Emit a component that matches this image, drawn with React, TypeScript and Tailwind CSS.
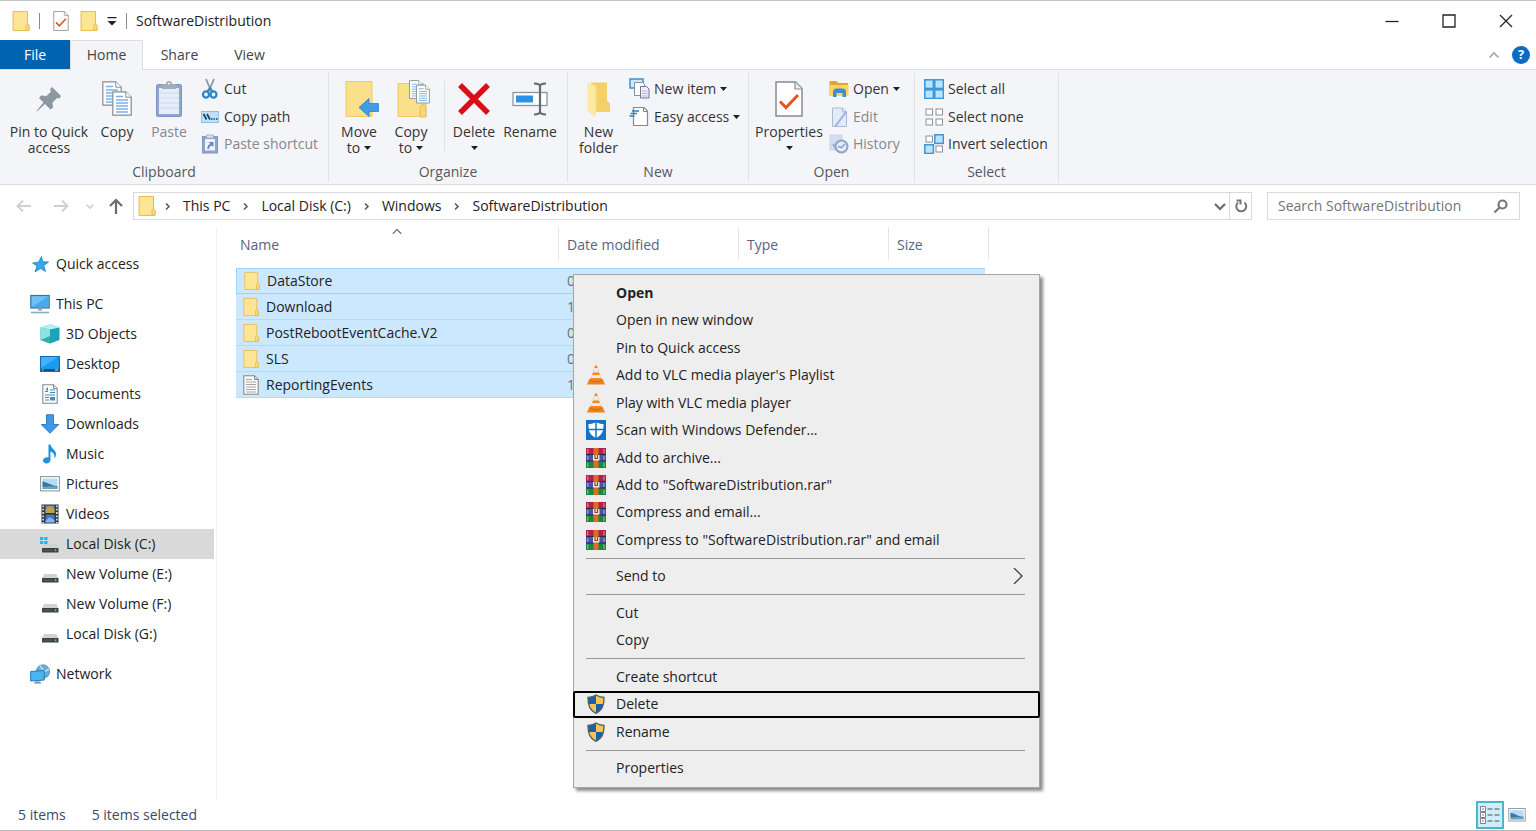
import React from "react";

type IconProps = { className?: string };

function Folder({ className = "w-5 h-5" }: IconProps) {
  return (
    <svg viewBox="0 0 20 22" className={className} aria-hidden="true">
      <path d="M2 1.500h14.500v13l1.500 1v5H2z" fill="#fbe28c" stroke="#e6bf5a" strokeWidth="1" />
      <path d="M3 2.500h12.500v17H3z" fill="#fde595" />
      <path d="M15 20.500v-5l1.500-2 1.500 2v5z" fill="#f9dc7e" stroke="#e0b548" strokeWidth=".8" />
    </svg>
  );
}

function CheckedPage({ className = "" }: IconProps) {
  return (
    <svg viewBox="0 0 28 36" className={className} aria-hidden="true">
      <path d="M1 1h19.500l6.500 6.500V35H1z" fill="#fff" stroke="#8b8b8f" strokeWidth="1.500" />
      <path d="M20 1v7h7" fill="#eceef2" stroke="#8b8b8f" strokeWidth="1.200" />
      <path d="M5 20.500l6 6L23 14" fill="none" stroke="#dd5a26" strokeWidth="3" />
    </svg>
  );
}

function Pin() {
  return (
    <svg viewBox="0 0 28 28" className="h-7 w-7" aria-hidden="true">
      <path d="M17 2l9 9-1.500 2.500-2.500-.5-4.500 4.500.5 5-2.500 2-5.500-5.500L2 26.500 1.500 26 8.500 17.500 4 13l2-2.500 5.500.5L16 6.500 15 4z" fill="#8d979f" />
    </svg>
  );
}

function Sheet({ x, y }: { x: number; y: number }) {
  return (
    <g transform={`translate(${x} ${y})`}>
      <path d="M.8.8h13l5.400 5.400v18H.8z" fill="#fff" stroke="#848c94" strokeWidth="1.200" />
      <path d="M13.800.8v5.400h5.400" fill="#fff" stroke="#848c94" strokeWidth="1" />
      <path d="M4 5.500h7M4 9h12M4 12h12M4 15h12M4 18h12M4 21h12" stroke="#79b0e8" strokeWidth="1.300" />
    </g>
  );
}

function CopyIcon() {
  return (
    <svg viewBox="0 0 32 36" className="h-9 w-8" aria-hidden="true">
      <Sheet x={1} y={0} />
      <Sheet x={11} y={10} />
    </svg>
  );
}

function PasteIcon() {
  return (
    <svg viewBox="0 0 28 38" className="h-[38px] w-7" aria-hidden="true">
      <rect x="1.500" y="4.500" width="25" height="32" rx="1.500" fill="#8fa6cf" stroke="#7d94bf" />
      <rect x="4" y="8" width="20" height="26" fill="#e6edf9" />
      <path d="M4 13h20M4 18h20M4 23h20M4 28h20" stroke="#ccd9f0" />
      <path d="M7 4h4a3 3 0 0 1 6 0h4v5H7z" fill="#a3acbb" />
      <circle cx="14" cy="3.500" r="1" fill="#f5f6f9" />
    </svg>
  );
}

function CutIcon() {
  return (
    <svg viewBox="0 0 18 21" className="h-[21px] w-[18px]" aria-hidden="true">
      <path d="M5 1l5.500 13M13 1L7.500 14" stroke="#8c969e" strokeWidth="1.800" fill="none" />
      <ellipse cx="5" cy="16.500" rx="3" ry="3.200" fill="none" stroke="#2b86c8" strokeWidth="2.200" />
      <ellipse cx="12.500" cy="16.500" rx="3" ry="3.200" fill="none" stroke="#2b86c8" strokeWidth="2.200" />
      <path d="M6.500 13L9 10l2.500 3" fill="none" stroke="#2b86c8" strokeWidth="1.800" />
    </svg>
  );
}

function CopyPathIcon() {
  return (
    <svg viewBox="0 0 18 12" className="h-3 w-[18px]" aria-hidden="true">
      <rect x=".5" y=".5" width="17" height="11" fill="#bfe0f6" stroke="#91c0e0" />
      <path d="M2.500 3l3 5.500M6 3l3 5.500" stroke="#16405f" strokeWidth="1.700" />
      <path d="M10 8h1.500M12.500 8H14M15 8h1.500" stroke="#16405f" strokeWidth="1.500" />
    </svg>
  );
}

function PasteShortcutIcon() {
  return (
    <svg viewBox="0 0 18 20" className="h-5 w-[18px]" aria-hidden="true">
      <rect x="1.500" y="2.500" width="15" height="16.500" fill="#8fa5cc" stroke="#8199c4" />
      <rect x="4" y="5" width="10" height="11.500" fill="#edf2fb" />
      <path d="M5.500 1h7v3h-7z" fill="#dde4f0" stroke="#98a7c2" strokeWidth=".8" />
      <path d="M6.500 15c-.5-3 1-4.500 3-5l-2-2h5v5l-1.500-1.500c-2 .5-3 1.500-3 3.500z" fill="#6886b8" />
    </svg>
  );
}

function MoveIcon() {
  return (
    <svg viewBox="-6 0 40 38" className="h-[38px] w-10" aria-hidden="true">
      <path d="M1 1.500h26v35H1z" fill="#fbe08a" stroke="#ecca69" />
      <path d="M22 36.500V29l3-2 2 2v7.500z" fill="#f5d270" />
      <path d="M14 27.500L24 18.500v5h9.500v8H24v5z" fill="#3f9ce6" stroke="#2b82cb" strokeWidth=".8" />
    </svg>
  );
}

function CopyToIcon() {
  return (
    <svg viewBox="-6 0 40 38" className="h-[38px] w-10" aria-hidden="true">
      <path d="M1 3.500h26v18l2 2v13H1z" fill="#fbe08a" stroke="#ecca69" />
      <path d="M23 37V27l3-3 3 3v10z" fill="#f6d67a" stroke="#dfb650" strokeWidth=".8" />
      <g transform="translate(12 0) scale(.7 .76)"><Sheet x={0} y={0} /><Sheet x={10} y={6} /></g>
    </svg>
  );
}

function DeleteIcon() {
  return (
    <svg viewBox="0 0 34 34" className="h-[34px] w-[34px]" aria-hidden="true">
      <path d="M3 3l28 28M31 3L3 31" stroke="#d90f17" strokeWidth="5.500" />
    </svg>
  );
}

function RenameIcon() {
  return (
    <svg viewBox="0 0 36 36" className="h-9 w-9" aria-hidden="true">
      <rect x="1" y="11.500" width="34" height="13" fill="#fff" stroke="#8d939a" strokeWidth="1.300" />
      <rect x="4" y="14.500" width="17" height="7" fill="#2f8fe2" />
      <path d="M22 2.500c4 0 6 .5 6 3v25c0 2.500-2 3-6 3M34 2.500c-4 0-6 .5-6 3v25c0 2.500 2 3 6 3" fill="none" stroke="#666b70" strokeWidth="2.200" />
    </svg>
  );
}

function NewFolderIcon() {
  return (
    <svg viewBox="0 0 26 36" className="h-9 w-[26px]" aria-hidden="true">
      <path d="M5 1.500h16v18l3 3V31H5z" fill="#f4d069" />
      <path d="M1.500 1.500L10 5v24L8 35 1.500 30z" fill="#fdeaa0" />
      <path d="M10 5v24l-2 6" fill="none" stroke="#f7dc84" />
    </svg>
  );
}

function NewItemIcon() {
  return (
    <svg viewBox="0 0 21 21" className="h-[21px] w-[21px]" aria-hidden="true">
      <rect x="1" y="1" width="13" height="9" fill="#cfeafa" stroke="#3e93c3" strokeWidth="1.500" />
      <path d="M5.500 4.500h8l2 2v11h-10z" fill="#fff" stroke="#82919e" />
      <path d="M11.500 8.500h6l2.500 2.500v9h-8.500z" fill="#f0effb" stroke="#77758f" />
      <path d="M13 13h5.500M13 15.500h5.500M13 18h5.500" stroke="#b4afd5" />
    </svg>
  );
}

function EasyAccessIcon() {
  return (
    <svg viewBox="0 0 21 21" className="h-[21px] w-[21px]" aria-hidden="true">
      <path d="M4.500 1.500H15l3.500 3.500v14.500h-14z" fill="#fff" stroke="#84888e" strokeWidth="1.200" />
      <path d="M14.500 1.500v4h4" fill="none" stroke="#84888e" />
      <path d="M3 5h7M1.500 7.500H8M.5 10h5" stroke="#2b7fbe" strokeWidth="1.600" />
    </svg>
  );
}

function OpenIcon() {
  return (
    <svg viewBox="0 0 20 18" className="h-[18px] w-5" aria-hidden="true">
      <path d="M.5 1h7l2 2H19v13H.5z" fill="#e5a52b" />
      <path d="M.5 5h19v11H.5z" fill="#fbd55f" />
      <path d="M4 17V12q0-3.500 3.500-3.500h6Q17 8.500 17 12v5h-3.500v-4h-6v4z" fill="#3c8fcc" />
    </svg>
  );
}

function EditIcon() {
  return (
    <svg viewBox="0 0 20 20" className="h-5 w-5" aria-hidden="true">
      <path d="M3.500 1h10l4 4v14.500h-14z" fill="#e3ebf8" stroke="#a9bad8" />
      <path d="M13.500 1v4h4" fill="none" stroke="#a9bad8" />
      <path d="M17.500 4.500L6.500 19" stroke="#9db2d8" strokeWidth="2" />
    </svg>
  );
}

function HistoryIcon() {
  return (
    <svg viewBox="0 0 20 20" className="h-5 w-5" aria-hidden="true">
      <rect x="1" y="1" width="12" height="15" fill="#d3def3" stroke="#c5d3ec" />
      <circle cx="12.500" cy="12.500" r="6" fill="#e4ebf8" stroke="#8fa3c8" strokeWidth="2" />
      <path d="M9 12.500l3.500 1 3.500-3.500M4 10l3 5" fill="none" stroke="#8fa3c8" strokeWidth="1.600" />
    </svg>
  );
}

function SelectGrid({ on }: { on: boolean[] }) {
  return (
    <svg viewBox="0 0 20 20" className="h-5 w-5" aria-hidden="true">
      {on.map((filled, i) => {
        const x = (i % 2) * 10;
        const y = Math.floor(i / 2) * 10;
        return filled ? (
          <rect key={i} x={x + 0.8} y={y + 0.8} width="8.600" height="8.600" fill="#b9e4fb" stroke="#3797d8" strokeWidth="1.500" />
        ) : (
          <rect key={i} x={x + 2} y={y + 2} width="6.500" height="6" fill="#fff" stroke="#8d9196" strokeWidth="1" />
        );
      })}
    </svg>
  );
}

function Caret() {
  return (
    <svg viewBox="0 0 7 4" className="inline-block h-1 w-[7px]" aria-hidden="true">
      <path d="M0 0h7L3.500 4z" fill="#1f1f1f" />
    </svg>
  );
}

function Chevron({ d, className, w = 2 }: { d: string; className: string; w?: number }) {
  return (
    <svg viewBox="0 0 12 12" className={className} fill="none" stroke="currentColor" strokeWidth={w} aria-hidden="true">
      <path d={d} />
    </svg>
  );
}

/* Ribbon building blocks */

function BigButton({ icon, lines, caret, width, disabled }: { icon: React.ReactNode; lines: string[]; caret?: boolean; width: string; disabled?: boolean }) {
  return (
    <button disabled={disabled} className={`flex flex-col items-center whitespace-nowrap leading-4 disabled:text-[#85888c] ${width}`}>
      <span className="flex h-[51px] items-center">{icon}</span>
      <span>{lines[0]}</span>
      <span className="flex h-4 items-center gap-1">
        {lines[1]}
        {caret && <Caret />}
      </span>
    </button>
  );
}

function SmallButton({ icon, label, caret, gap, disabled }: { icon: React.ReactNode; label: string; caret?: boolean; gap: string; disabled?: boolean }) {
  return (
    <button disabled={disabled} className={`flex flex-1 items-center whitespace-nowrap disabled:text-[#85888c] ${gap}`}>
      {icon}
      <span>{label}</span>
      {caret && <Caret />}
    </button>
  );
}

function Group({ label, width, children }: { label: string; width: string; children: React.ReactNode }) {
  return (
    <section aria-label={label} className={`flex shrink-0 flex-col justify-between border-r border-[#e0e2e6] ${width}`}>
      <div className="flex">{children}</div>
      <div className="text-center leading-5 text-[#55585c]">{label}</div>
    </section>
  );
}

function Stack({ className = "", children }: { className?: string; children: React.ReactNode }) {
  return <div className={`flex h-[85px] flex-col pt-0.5 ${className}`}>{children}</div>;
}

function Ribbon() {
  return (
    <div className="flex h-[116px] shrink-0 overflow-hidden border-y border-[#dcdee2] bg-[#f4f5f9] pt-[3px] pb-0.5 text-[#333]">
      <Group label="Clipboard" width="w-[329px]">
        <BigButton icon={<Pin />} lines={["Pin to Quick", "access"]} width="ml-[9px] w-20" />
        <BigButton icon={<CopyIcon />} lines={["Copy"]} width="w-14" />
        <BigButton icon={<PasteIcon />} lines={["Paste"]} width="w-12" disabled />
        <Stack className="ml-2">
          <SmallButton icon={<CutIcon />} label="Cut" gap="gap-[5px]" />
          <SmallButton icon={<CopyPathIcon />} label="Copy path" gap="gap-[5px]" />
          <SmallButton icon={<PasteShortcutIcon />} label="Paste shortcut" gap="gap-[5px]" disabled />
        </Stack>
      </Group>
      <Group label="Organize" width="w-[239px]">
        <BigButton icon={<MoveIcon />} lines={["Move", "to"]} caret width="ml-1 w-[52px]" />
        <BigButton icon={<CopyToIcon />} lines={["Copy", "to"]} caret width="w-[52px]" />
        <div className="mt-2 ml-[7px] h-[70px] w-px bg-[#e0e2e6]" />
        <BigButton icon={<DeleteIcon />} lines={["Delete"]} caret width="w-[58px]" />
        <BigButton icon={<RenameIcon />} lines={["Rename"]} width="w-[54px]" />
      </Group>
      <Group label="New" width="w-[181px]">
        <BigButton icon={<NewFolderIcon />} lines={["New", "folder"]} width="w-[61px]" />
        <Stack>
          <SmallButton icon={<NewItemIcon />} label="New item" caret gap="gap-1" />
          <SmallButton icon={<EasyAccessIcon />} label="Easy access" caret gap="gap-1" />
          <div className="flex-1" />
        </Stack>
      </Group>
      <Group label="Open" width="w-[166px]">
        <BigButton icon={<CheckedPage className="h-9 w-7" />} lines={["Properties"]} caret width="w-20" />
        <Stack>
          <SmallButton icon={<OpenIcon />} label="Open" caret gap="gap-1" />
          <SmallButton icon={<EditIcon />} label="Edit" gap="gap-1" disabled />
          <SmallButton icon={<HistoryIcon />} label="History" gap="gap-1" disabled />
        </Stack>
      </Group>
      <Group label="Select" width="w-[144px]">
        <Stack className="ml-[9px]">
          <SmallButton icon={<SelectGrid on={[true, true, true, true]} />} label="Select all" gap="gap-1" />
          <SmallButton icon={<SelectGrid on={[false, false, false, false]} />} label="Select none" gap="gap-1" />
          <SmallButton icon={<SelectGrid on={[false, true, true, false]} />} label="Invert selection" gap="gap-1" />
        </Stack>
      </Group>
    </div>
  );
}

function TitleBar() {
  return (
    <header className="flex h-10 shrink-0 items-center border-t border-[#c4c4c4] pl-[11px]">
      <Folder className="h-[22px] w-5" />
      <span className="ml-2 h-4 w-px bg-[#8b8b8b]" />
      <button aria-label="Properties" className="ml-[13px]"><CheckedPage className="h-5 w-4" /></button>
      <button aria-label="New folder" className="ml-[10px]"><Folder className="h-[22px] w-5" /></button>
      <button aria-label="Customize Quick Access Toolbar" className="ml-2">
        <svg viewBox="0 0 10 10" className="h-2.5 w-2.5" aria-hidden="true"><path d="M.5 1h9v1.300h-9zM.5 5h9L5 9.500z" fill="#222" /></svg>
      </button>
      <span className="ml-[9px] h-4 w-px bg-[#8b8b8b]" />
      <h1 className="ml-[9px] text-[#222]">SoftwareDistribution</h1>
      <div className="mr-0.5 ml-auto flex text-[#222]">
        <button aria-label="Minimize" className="grid h-9 w-[57px] place-items-center">
          <svg viewBox="0 0 14 14" className="h-3.5 w-3.5" stroke="currentColor" strokeWidth="1.300"><path d="M.5 7.500h13" /></svg>
        </button>
        <button aria-label="Maximize" className="grid h-9 w-[57px] place-items-center">
          <svg viewBox="0 0 14 14" className="h-3.5 w-3.5" fill="none" stroke="currentColor" strokeWidth="1.300"><path d="M1 1h12v12H1z" /></svg>
        </button>
        <button aria-label="Close" className="grid h-9 w-[57px] place-items-center">
          <svg viewBox="0 0 14 14" className="h-3.5 w-3.5" stroke="currentColor" strokeWidth="1.300"><path d="M1 1l12 12M13 1L1 13" /></svg>
        </button>
      </div>
    </header>
  );
}

function Tabs() {
  return (
    <nav className="flex h-[29px] shrink-0 items-stretch text-[#444]">
      <button className="w-[70px] bg-[#0063b1] text-white">File</button>
      <button className="relative z-10 -mb-px w-[73px] border-x border-t border-[#dcdee2] bg-[#f4f5f9] pb-0.5">Home</button>
      <button className="w-[73px]">Share</button>
      <button className="w-[67px]">View</button>
      <div className="mr-1.5 ml-auto flex items-center gap-3">
        <button aria-label="Minimize the Ribbon"><Chevron d="M1.500 8.500L6 4l4.500 4.500" className="h-3 w-3 text-[#a5a5a5]" w={1.6} /></button>
        <button aria-label="Help" className="grid h-[18px] w-[18px] place-items-center rounded-full bg-[#0a6cc4] text-[13px] font-bold leading-none text-white">?</button>
      </div>
    </nav>
  );
}

function AddressRow() {
  const crumbs = ["This PC", "Local Disk (C:)", "Windows", "SoftwareDistribution"];
  return (
    <div className="flex h-[42px] shrink-0 items-center pr-4">
      <div className="flex w-[133px] shrink-0 items-center pl-4">
        <button aria-label="Back" className="text-[#cfcfcf]">
          <svg viewBox="0 0 16 16" className="h-4 w-4" fill="none" stroke="currentColor" strokeWidth="1.800"><path d="M15 8H2M7 2.500L1.500 8 7 13.500" /></svg>
        </button>
        <button aria-label="Forward" className="ml-[21px] text-[#cfcfcf]">
          <svg viewBox="0 0 16 16" className="h-4 w-4" fill="none" stroke="currentColor" strokeWidth="1.800"><path d="M1 8h13M9 2.500L14.500 8 9 13.500" /></svg>
        </button>
        <button aria-label="Recent locations" className="ml-4 text-[#cfcfcf]"><Chevron d="M2 4.500l4 4 4-4" className="h-2.5 w-2.5" /></button>
        <button aria-label="Up" className="ml-[13px] text-[#6b6b6b]">
          <svg viewBox="0 0 16 16" className="h-4 w-4" fill="none" stroke="currentColor" strokeWidth="2.200"><path d="M8 16V2M2 8l6-6 6 6" /></svg>
        </button>
      </div>
      <div className="flex h-7 min-w-0 flex-1 items-center border border-[#d9d9d9] pl-[3px] text-[#222]">
        <Folder className="h-[22px] w-5" />
        {crumbs.map((crumb) => (
          <React.Fragment key={crumb}>
            <Chevron d="M4 2l4 4-4 4" className="ml-1.5 h-[9px] w-[9px] text-[#555]" />
            <button className="ml-[11px] whitespace-nowrap pr-[5px]">{crumb}</button>
          </React.Fragment>
        ))}
        <button aria-label="Previous locations" className="ml-auto mr-[3px] text-[#6b6b6b]"><Chevron d="M1 4L6 9l5-5" className="h-3 w-3" w={2.2} /></button>
        <button aria-label="Refresh" className="grid h-full w-[22px] place-items-center border-l border-[#d9d9d9] text-[#777]">
          <svg viewBox="0 0 14 16" className="h-4 w-3.5" fill="none" stroke="currentColor" strokeWidth="2"><path d="M10.500 4.500A5 5 0 1 1 4 4.500" /><path d="M2.500 2.500h4v4" /></svg>
        </button>
      </div>
      <label className="ml-[15px] flex h-7 w-[253px] shrink-0 items-center border border-[#d9d9d9] pl-2.5 pr-2.5">
        <input type="search" aria-label="Search SoftwareDistribution" placeholder="Search SoftwareDistribution" className="min-w-0 flex-1 outline-none placeholder:text-[#757575]" />
        <svg viewBox="0 0 16 16" className="h-4 w-4 text-[#777]" fill="none" stroke="currentColor" strokeWidth="2.200"><circle cx="9.500" cy="6.500" r="4" /><path d="M6.500 9.500L1.500 14.500" /></svg>
      </label>
    </div>
  );
}

/* Navigation pane icons */

function Star() {
  return (
    <svg viewBox="0 0 17 17" className="h-[17px] w-[17px]" aria-hidden="true">
      <path d="M9.500.5l1.200 5.200 5.800.3-4.700 3.500 1.700 6-5-3-5.500 3.500 2-6L.5 7l6-.8z" fill="#36a7e8" stroke="#1b84c5" strokeWidth=".8" />
    </svg>
  );
}

function Computer() {
  return (
    <svg viewBox="0 0 20 20" className="h-5 w-5" aria-hidden="true">
      <rect x=".8" y="1.500" width="18.400" height="12.500" fill="#6fc0f6" stroke="#33779f" strokeWidth="1.200" />
      <path d="M2 13L18 2.500V13z" fill="#4aa8ec" />
      <path d="M8 15h4v1.500H8z" fill="#8ca3b3" />
      <path d="M1 18.500h18" stroke="#8ca9bd" strokeWidth="1.600" />
    </svg>
  );
}

function Cube() {
  return (
    <svg viewBox="0 0 20 20" className="h-5 w-5" aria-hidden="true">
      <path d="M.5 3.500L10 .5l9.500 3v12.500L10 19.500.5 16z" fill="#1aa3bb" />
      <path d="M.5 3.500L10 5.500v14L.5 16z" fill="#8be3e3" />
      <path d="M.5 3.500L10 .5l9.500 3-9.500 2z" fill="#b8f0f0" />
      <path d="M10 12v7.500L.5 16z" fill="#2fb0a5" />
    </svg>
  );
}

function Desktop() {
  return (
    <svg viewBox="0 0 20 16" className="h-4 w-5" aria-hidden="true">
      <rect x=".6" y=".6" width="18.800" height="14.800" fill="#199bf2" stroke="#176ab0" strokeWidth="1.200" />
      <path d="M1 12V1h17z" fill="#42b1fa" />
      <path d="M1 14h18" stroke="#164f80" strokeWidth="2" />
      <path d="M2 14h1.500M15 14h3" stroke="#d0ebfc" />
    </svg>
  );
}

function DocumentIcon() {
  return (
    <svg viewBox="0 0 16 20" className="mx-0.5 h-5 w-4" aria-hidden="true">
      <path d="M.8.8h10.700l3.700 3.700v14.700H.8z" fill="#fff" stroke="#7f8c95" strokeWidth="1.100" />
      <path d="M11.500.8v3.700h3.700" fill="#e5eaee" stroke="#7f8c95" />
      <path d="M3 7.500h3M8 6h5M8 8.500h5M3 11h10M3 13.500h4M3 16h4" stroke="#3c8dbd" strokeWidth="1.200" />
      <path d="M3.500 5.500L6 3v4zM8 13h5v3.500H8z" fill="#4191b9" />
    </svg>
  );
}

function DownArrow() {
  return (
    <svg viewBox="0 0 20 20" className="h-5 w-5" aria-hidden="true">
      <path d="M6.500.7h7v9.800h5.300L10 19.300 1.200 10.500h5.300z" fill="#3c98e8" stroke="#2878bc" strokeWidth=".9" />
    </svg>
  );
}

function Note() {
  return (
    <svg viewBox="0 0 20 20" className="h-5 w-5" aria-hidden="true">
      <path d="M8.500.5h2c.5 4 5.500 5.500 5.500 9.500 0 2-.8 3.500-1.800 4.500.8-4-1-6-3.700-7v8.200c0 2.500-2 3.800-4 3.800S3 18.300 3 16.600c0-2.200 2.500-3.800 5.500-3.200z" fill="#1f91e3" />
    </svg>
  );
}

function PictureIcon({ className = "h-4 w-5" }: IconProps) {
  return (
    <svg viewBox="0 0 20 16" className={className} aria-hidden="true">
      <rect x=".6" y=".6" width="18.800" height="14.300" fill="#fff" stroke="#8e9ca6" strokeWidth="1.100" />
      <rect x="2.500" y="2.500" width="15" height="10.500" fill="#b5dcf6" />
      <path d="M2.500 5.500c4 0 7 4 15 4.500v1h-15z" fill="#39799d" />
      <path d="M2.500 11.500c5-1.500 9-1.500 15-1V13h-15z" fill="#6fa3bd" />
    </svg>
  );
}

function Film() {
  return (
    <svg viewBox="0 0 18 20" className="mx-px h-5 w-[18px]" aria-hidden="true">
      <rect x=".5" y=".5" width="17" height="19" fill="#2c3237" />
      <path d="M2.200 1.500v18M15.800 1.500v18" stroke="#d5dce0" strokeWidth="1.800" strokeDasharray="1.800 1.500" />
      <rect x="4.500" y="1.500" width="9" height="7.500" fill="#7690a8" />
      <path d="M4.500 6l4-4 5 3.500V9h-9z" fill="#c5a43f" />
      <rect x="4.500" y="10.500" width="9" height="8" fill="#3f76d0" />
      <path d="M4.500 17l4-4 5 3v2.500h-9z" fill="#88b3ed" />
    </svg>
  );
}

function Drive({ system }: { system?: boolean }) {
  return (
    <svg viewBox="0 0 20 20" className="h-5 w-5" aria-hidden="true">
      <path d="M4 10h12.500l2 4.500H2z" fill="#cfd3d5" />
      <rect x="2" y="14" width="16.500" height="4.500" rx=".5" fill="#3c4245" />
      <path d="M4 16.200h8" stroke="#5b6266" />
      <circle cx="15.500" cy="16.200" r="1" fill="#58d46b" />
      {system && <path d="M0 3h3.300v3H0zM4.200 3h3.300v3H4.200zM0 7h3.300v3H0zM4.200 7h3.300v3H4.200z" fill="#27b2ea" />}
    </svg>
  );
}

function NetworkIcon() {
  return (
    <svg viewBox="0 0 20 20" className="h-5 w-5" aria-hidden="true">
      <circle cx="13" cy="7.500" r="6.700" fill="#6aaed3" stroke="#457f9f" strokeWidth=".7" />
      <path d="M10 2c3 2 1 4 4 5s4-3 5-1" fill="none" stroke="#c2e4f3" strokeWidth="1.400" />
      <path d="M.7 7.500l13.500-1v9.500l-13.500 1z" fill="#4cb4f1" stroke="#1e7cb4" />
      <path d="M5 17.500h5l1.500 2H4z" fill="#6b91aa" />
    </svg>
  );
}

function NavItem({ icon, label, level = 1, selected }: { icon: React.ReactNode; label: string; level?: number; selected?: boolean }) {
  return (
    <li>
      <button className={`flex h-[30px] w-full items-center gap-1.5 whitespace-nowrap text-left ${level === 1 ? "pl-[30px]" : "pl-10"} ${selected ? "bg-[#d9d9d9]" : ""}`}>
        <span className="flex w-5 shrink-0 justify-center">{icon}</span>
        {label}
      </button>
    </li>
  );
}

function Sidebar() {
  return (
    <aside className="w-[217px] shrink-0 border-r border-[#f3f3f3] pt-[22px] pr-0.5 text-[#222]">
      <ul>
        <NavItem icon={<Star />} label="Quick access" />
      </ul>
      <ul className="mt-2.5">
        <NavItem icon={<Computer />} label="This PC" />
        <NavItem level={2} icon={<Cube />} label="3D Objects" />
        <NavItem level={2} icon={<Desktop />} label="Desktop" />
        <NavItem level={2} icon={<DocumentIcon />} label="Documents" />
        <NavItem level={2} icon={<DownArrow />} label="Downloads" />
        <NavItem level={2} icon={<Note />} label="Music" />
        <NavItem level={2} icon={<PictureIcon />} label="Pictures" />
        <NavItem level={2} icon={<Film />} label="Videos" />
        <NavItem level={2} icon={<Drive system />} label="Local Disk (C:)" selected />
        <NavItem level={2} icon={<Drive />} label="New Volume (E:)" />
        <NavItem level={2} icon={<Drive />} label="New Volume (F:)" />
        <NavItem level={2} icon={<Drive />} label="Local Disk (G:)" />
      </ul>
      <ul className="mt-2.5">
        <NavItem icon={<NetworkIcon />} label="Network" />
      </ul>
    </aside>
  );
}

/* File list */

function TextFile() {
  return (
    <svg viewBox="0 0 16 20" className="mx-px h-5 w-4" aria-hidden="true">
      <path d="M.8.8h10.700l3.700 3.700v14.700H.8z" fill="#fbfbfb" stroke="#85888b" strokeWidth="1.100" />
      <path d="M11.500.8v3.700h3.700" fill="#ddd" stroke="#85888b" />
      <path d="M3 4.500h6M3 7h10M3 9.500h10M3 12h10M3 14.500h10M3 17h10" stroke="#a2a5a8" />
    </svg>
  );
}

const files = [
  { name: "DataStore", date: "0", folder: true },
  { name: "Download", date: "1", folder: true },
  { name: "PostRebootEventCache.V2", date: "0", folder: true },
  { name: "SLS", date: "0", folder: true },
  { name: "ReportingEvents", date: "1", folder: false },
];

function FileTable() {
  return (
    <table className="ml-[19px] w-[753px] table-fixed border-separate border-spacing-0 self-start text-left">
      <colgroup>
        <col className="w-[323px]" />
        <col className="w-[180px]" />
        <col className="w-[150px]" />
        <col className="w-24" />
        <col className="w-1" />
      </colgroup>
      <thead className="text-[#56657f]">
        <tr className="h-[33px]">
          <th className="relative border-r border-[#e5e5e5] pt-0.5 pb-0 pl-1 font-normal">
            Name
            <span className="absolute inset-x-0 top-0 flex justify-center"><Chevron d="M1 8l5-5 5 5" className="h-2.5 w-3 text-[#777]" w={1.6} /></span>
          </th>
          <th className="border-r border-[#e5e5e5] pt-0.5 pb-0 pl-2 font-normal">Date modified</th>
          <th className="border-r border-[#e5e5e5] pt-0.5 pb-0 pl-2 font-normal">Type</th>
          <th colSpan={2} className="border-r border-[#e5e5e5] pt-0.5 pb-0 pl-2 font-normal">Size</th>
        </tr>
      </thead>
      <tbody className="text-[#222]">
        <tr className="h-2"><td colSpan={5} className="p-0" /></tr>
        {files.map((file, i) => {
          const line = i === 0 ? "bg-[#cce8ff] border-y border-[#99d1ff]" : "bg-[#cce8ff] border-b border-[#b0dcfb]";
          return (
            <tr key={file.name} className="h-[26px]">
              <td className={`py-0 pr-0 pl-1.5 ${line} ${i === 0 ? "border-l" : ""}`}>
                <span className="flex items-center gap-1.5">
                  {file.folder ? <Folder className="h-[22px] w-[18px]" /> : <TextFile />}
                  {file.name}
                </span>
              </td>
              <td className={`py-0 pr-0 pl-2 text-[#6d7278] ${line}`}>{file.date}</td>
              <td className={`p-0 ${line}`} />
              <td className={`p-0 ${line}`} />
              <td className="p-0" />
            </tr>
          );
        })}
      </tbody>
    </table>
  );
}

/* Context menu */

function Vlc() {
  return (
    <svg viewBox="0 0 20 20" className="h-5 w-5" aria-hidden="true">
      <path d="M3.500 13.500h13L19 19.500H1z" fill="#e9821d" />
      <path d="M9 .5h2l4.500 15q-5.500 2.500-11 0z" fill="#f08a24" />
      <path d="M8.400 3h3.200l1.400 4.500H7zM6.200 10h7.600l.9 3H5.300z" fill="#eceae8" />
      <path d="M4.500 15.500q5.500 2.500 11 0" fill="none" stroke="#c86a12" />
    </svg>
  );
}

function Defender() {
  return (
    <svg viewBox="0 0 20 20" className="h-5 w-5" aria-hidden="true">
      <rect width="20" height="20" fill="#1273c9" />
      <path d="M10 2c2 1.500 5 2 7.500 2 0 7-1 11-7.500 14C3.500 15 2.500 11 2.500 4 5 4 8 3.500 10 2z" fill="#fff" />
      <path d="M10 2v16M2 9.500h16" stroke="#1273c9" strokeWidth="1.500" />
    </svg>
  );
}

function WinRar() {
  return (
    <svg viewBox="0 0 20 20" className="h-5 w-5" aria-hidden="true">
      <rect width="20" height="6.500" fill="#b51e4d" />
      <rect y="6.500" width="20" height="6.500" fill="#4c4fb3" />
      <rect y="13" width="20" height="7" fill="#18883c" />
      <path d="M0 6.500h20M0 13h20" stroke="#273238" />
      <path d="M1.800 1v4.500M1.800 8v4M1.800 14.500V19M18 1v4.500M18 8v4M18 14.500V19" stroke="#fff" strokeOpacity=".45" strokeWidth="1.200" />
      <rect x="7.500" width="5" height="20" fill="#df6b25" />
      <path d="M7 7h6.500v5.500H7z" fill="#efeae2" />
      <path d="M9 7v3.500h2.500V7" fill="none" stroke="#8d3f30" strokeWidth="1.200" />
    </svg>
  );
}

function Shield() {
  return (
    <svg viewBox="0 0 20 20" className="h-5 w-5" aria-hidden="true">
      <clipPath id="shield-shape"><path d="M10 1c2 1.500 5 2.300 8 2.500C18 11 16.500 16 10 19.300 3.500 16 2 11 2 3.500 5 3.300 8 2.500 10 1z" /></clipPath>
      <g clipPath="url(#shield-shape)">
        <path d="M0 0h10v10H0zM10 10h10v10H10z" fill="#1b5fae" />
        <path d="M10 0h10v10H10zM0 10h10v10H0z" fill="#f7c64a" />
      </g>
      <path d="M10 1c2 1.500 5 2.300 8 2.500C18 11 16.500 16 10 19.300 3.500 16 2 11 2 3.500 5 3.300 8 2.500 10 1z" fill="none" stroke="#56636b" strokeWidth="1.400" />
    </svg>
  );
}

type Entry = { label: string; icon?: React.ReactNode; bold?: boolean; submenu?: boolean; focused?: boolean };

const sections: Entry[][] = [
  [
    { label: "Open", bold: true },
    { label: "Open in new window" },
    { label: "Pin to Quick access" },
    { label: "Add to VLC media player's Playlist", icon: <Vlc /> },
    { label: "Play with VLC media player", icon: <Vlc /> },
    { label: "Scan with Windows Defender...", icon: <Defender /> },
    { label: "Add to archive...", icon: <WinRar /> },
    { label: 'Add to "SoftwareDistribution.rar"', icon: <WinRar /> },
    { label: "Compress and email...", icon: <WinRar /> },
    { label: 'Compress to "SoftwareDistribution.rar" and email', icon: <WinRar /> },
  ],
  [{ label: "Send to", submenu: true }],
  [{ label: "Cut" }, { label: "Copy" }],
  [{ label: "Create shortcut" }, { label: "Delete", icon: <Shield />, focused: true }, { label: "Rename", icon: <Shield /> }],
  [{ label: "Properties" }],
];

function ContextMenu() {
  return (
    <div role="menu" className="absolute top-[274px] left-[573px] flex h-[514px] w-[467px] flex-col border border-[#a5a5a5] bg-[#eeeeee] pt-1 pb-[5px] text-[#222] shadow-[3px_3px_3px_rgba(0,0,0,0.45)]">
      {sections.map((entries, s) => (
        <React.Fragment key={s}>
          {s > 0 && <hr className="mr-3.5 ml-3 my-1 h-px shrink-0 border-0 bg-[#9a9a9a]" />}
          {entries.map((entry) => (
            <button
              key={entry.label}
              role="menuitem"
              className={`-mx-px flex flex-1 items-center gap-2.5 whitespace-nowrap pr-3.5 pl-[13px] text-left ${entry.bold ? "font-bold" : ""} ${entry.focused ? "rounded-xs outline-2 -outline-offset-2 outline-black" : ""}`}
            >
              <span className="w-5 shrink-0">{entry.icon}</span>
              {entry.label}
              {entry.submenu && <Chevron d="M3 0l6 6-6 6" className="ml-auto h-4 w-4 text-[#444]" w={1} />}
            </button>
          ))}
        </React.Fragment>
      ))}
    </div>
  );
}

function StatusBar() {
  return (
    <footer className="flex h-[31px] shrink-0 items-center border-b border-[#b5b5b5] pl-[18px] pr-2.5 text-[#3b4a66]">
      <span>5 items</span>
      <span className="ml-[26px]">5 items selected</span>
      <div className="ml-auto flex items-center gap-1">
        <button aria-label="Details view" className="grid h-7 w-7 place-items-center border-2 border-[#4bb4cf] bg-[#cfeefb]">
          <svg viewBox="0 0 20 18" className="h-[18px] w-5" fill="none" stroke="#7b8388">
            <path d="M.5.500h5v5h-5zM.5 6.500h5v5h-5zM.5 12.500h5v5h-5z" fill="#fff" />
            <path d="M2 3h2M2 9h2M2 15h2" />
            <path d="M7.500 3h5M14.500 3h5M7.500 9h5M14.500 9h5M7.500 15h5M14.500 15h5" strokeWidth="1.400" />
          </svg>
        </button>
        <button aria-label="Large icons view"><PictureIcon className="h-3.5 w-[18px]" /></button>
      </div>
    </footer>
  );
}

export default function App() {
  return (
    <div className="relative flex h-screen flex-col overflow-hidden bg-white font-['Open_Sans','Noto_Sans',sans-serif] text-sm leading-5">
      <TitleBar />
      <Tabs />
      <Ribbon />
      <AddressRow />
      <main className="flex min-h-0 flex-1">
        <Sidebar />
        <FileTable />
      </main>
      <StatusBar />
      <ContextMenu />
    </div>
  );
}
